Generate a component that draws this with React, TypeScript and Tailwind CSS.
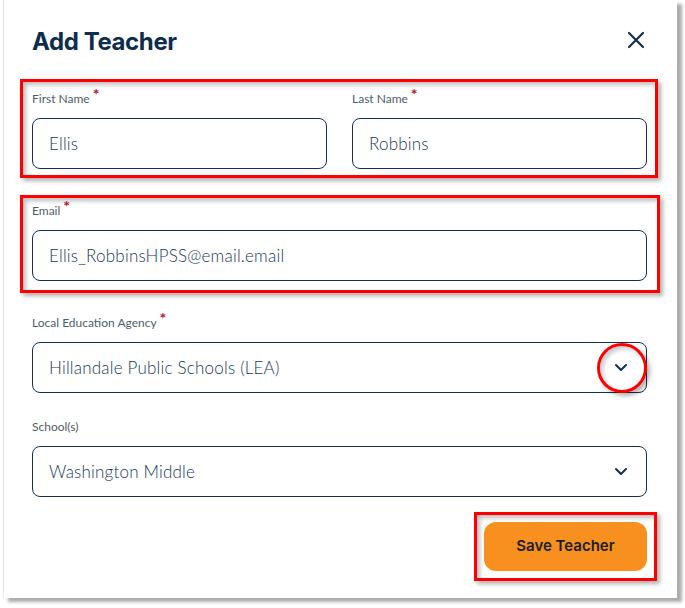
import { ReactNode } from 'react';

const inputClass =
  'h-[51px] w-full rounded-lg border border-[#15304f] bg-white px-4 flex items-center text-[17px] font-light tracking-[0.2px] text-[#1a3758]';

function Label({ children, required }: { children: ReactNode; required?: boolean }) {
  return (
    <div className="h-4 flex items-start text-[12px] leading-4 text-[#4f5d6d]">
      <span>{children}</span>
      {required && <span className="ml-[3px] -mt-[5px] text-[16px] font-bold text-[#c0121b]">*</span>}
    </div>
  );
}

function Chevron() {
  return (
    <svg width="14" height="9" viewBox="0 0 14 9" fill="none" className="shrink-0">
      <path d="M2 2l5 5 5-5" stroke="#15304f" strokeWidth="2" strokeLinecap="round" strokeLinejoin="round" />
    </svg>
  );
}

function SelectBox({ value }: { value: string }) {
  return (
    <div className={`${inputClass} justify-between pr-[18px]`}>
      <span>{value}</span>
      <Chevron />
    </div>
  );
}

export default function App() {
  return (
    <div className="relative w-[685px] h-[608px] bg-white font-['Lato',sans-serif]">
      <div className="ml-[3px] w-[674px] h-[598px] bg-white border-l border-[#e5e7eb] shadow-[5px_4px_3px_rgba(0,0,0,0.32)] pl-[28px] pr-[30px] pt-[26px]">
        {/* header */}
        <div className="flex items-center justify-between h-8">
          <h1 className="font-['Inter',sans-serif] text-[24px] leading-8 font-bold tracking-[-0.4px] text-[#0c2d4e]">
            Add Teacher
          </h1>
          <svg width="18" height="18" viewBox="0 0 18 18" className="mr-[2px] mt-[-4px]">
            <path d="M2 2l14 14M16 2L2 16" stroke="#15304f" strokeWidth="2.2" strokeLinecap="round" />
          </svg>
        </div>

        {/* name row */}
        <div className="mt-[33px] grid grid-cols-2 gap-[25px]">
          <div>
            <Label required>First Name</Label>
            <div className={`${inputClass} mt-[11px]`}>Ellis</div>
          </div>
          <div>
            <Label required>Last Name</Label>
            <div className={`${inputClass} mt-[11px]`}>Robbins</div>
          </div>
        </div>

        <div className="mt-[34px]">
          <Label required>Email</Label>
          <div className={`${inputClass} mt-[11px]`}>Ellis_RobbinsHPSS@email.email</div>
        </div>

        <div className="mt-[34px]">
          <Label required>Local Education Agency</Label>
          <div className="mt-[11px]">
            <SelectBox value="Hillandale Public Schools (LEA)" />
          </div>
        </div>

        <div className="mt-[26px]">
          <Label>School(s)</Label>
          <div className="mt-[11px]">
            <SelectBox value="Washington Middle" />
          </div>
        </div>

        <div className="mt-[25px] flex justify-end">
          <button className="w-[163px] h-[49px] rounded-xl bg-[#f7901e] font-['Inter',sans-serif] text-[15px] font-semibold text-[#1d1d1d]">
            Save Teacher
          </button>
        </div>
      </div>

      {/* highlight marks drawn over the form */}
      <div className="absolute left-[20px] top-[79px] w-[638px] h-[99px] border-[3px] border-[#ff0000] shadow-[3px_3px_4px_rgba(0,0,0,0.3),inset_3px_3px_4px_rgba(0,0,0,0.25)]" />
      <div className="absolute left-[20px] top-[195px] w-[640px] h-[98px] border-[3px] border-[#ff0000] shadow-[3px_3px_4px_rgba(0,0,0,0.3),inset_3px_3px_4px_rgba(0,0,0,0.25)]" />
      <div className="absolute left-[597px] top-[343px] w-[50px] h-[50px] rounded-full border-[3px] border-[#ff0000] shadow-[3px_3px_4px_rgba(0,0,0,0.3),inset_3px_3px_4px_rgba(0,0,0,0.2)]" />
      <div className="absolute left-[474px] top-[512px] w-[183px] h-[69px] border-[3px] border-[#ff0000] shadow-[3px_3px_4px_rgba(0,0,0,0.3),inset_3px_3px_4px_rgba(0,0,0,0.25)]" />
    </div>
  );
}
